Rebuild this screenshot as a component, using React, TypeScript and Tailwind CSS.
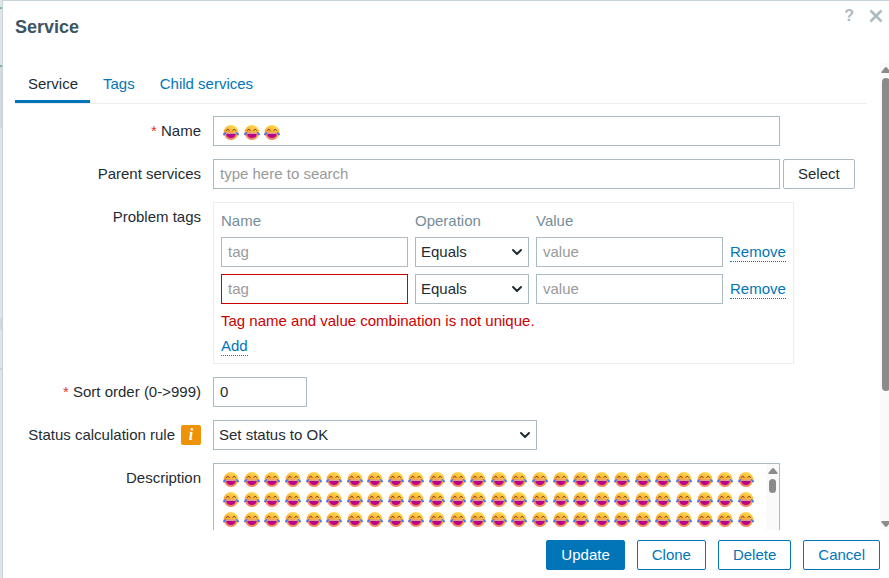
import { ChevronDown } from "lucide-react";
import { useState, type ReactNode } from "react";

type ProblemTag = { id: number; tag: string; operator: string; value: string; invalid?: boolean };

const TABS = ["Service", "Tags", "Child services"];

const FIELD = "h-[30px] w-full border border-[#acbbc2] bg-white px-[6px] pb-px outline-none placeholder:text-[#9a9a9a]";
const OUTLINE_BUTTON = "h-[30px] rounded-[2px] border border-[#0275b8] bg-white px-[14px] text-[#0275b8] hover:bg-sky-50";
const LINK = "border-b border-dotted border-[#0275b8] leading-[18px] text-[#0275b8]";

function JoyFace() {
  return (
    <svg viewBox="0 0 16 15" className="h-[15px] w-4" aria-hidden="true">
      <circle cx="8" cy="7.5" r="7.4" fill="url(#joy-skin)" />
      <path d="M3.400 5.400c.5-1.500 2.300-1.500 2.800 0M9.800 5.400c.5-1.500 2.300-1.500 2.800 0" fill="none" stroke="#70421d" strokeWidth="1" strokeLinecap="round" />
      <path d="M3.200 8.800h9.600c0 2.600-2 4.200-4.800 4.200s-4.800-1.600-4.800-4.200z" fill="#b8008f" />
      <path d="M3.200 7.600h9.600v1.300H3.200z" fill="#dba097" />
      <path d="M3.400 7C2.200 7 0 8.300 0 9.400c0 1.100 1.600 1.300 2.200.4.500-.9.600-1.800 1.200-2.800zM12.600 7c1.200 0 3.400 1.300 3.400 2.400 0 1.100-1.600 1.300-2.200.4-.5-.9-.6-1.800-1.200-2.800z" fill="#4379ee" />
    </svg>
  );
}

function EmojiText({ text }: { text: string }) {
  return (
    <div className="pointer-events-none absolute inset-0 grid auto-rows-[20px] grid-cols-[repeat(26,minmax(0,1fr))] content-start items-center justify-items-center overflow-hidden pt-[6px] pr-6 pl-2">
      {Array.from(text).map((char, i) => (char === "😂" ? <JoyFace key={i} /> : <span key={i}>{char}</span>))}
    </div>
  );
}

function Row({ label, htmlFor, required, hint, children }: { label: string; htmlFor?: string; required?: boolean; hint?: ReactNode; children: ReactNode }) {
  return (
    <div className="grid grid-cols-[186px_minmax(0,1fr)] gap-3">
      <div className="flex h-[30px] items-center justify-end gap-[6px] whitespace-nowrap">
        <label htmlFor={htmlFor}>
          {required ? <span className="text-[#e33734]">* </span> : null}
          {label}
        </label>
        {hint}
      </div>
      {children}
    </div>
  );
}

function Dropdown({ id, label, value, options, onChange }: { id?: string; label?: string; value: string; options: string[]; onChange: (value: string) => void }) {
  return (
    <div className="relative">
      <select
        id={id}
        aria-label={label}
        value={value}
        onChange={(e) => onChange(e.target.value)}
        className="block h-[30px] w-full appearance-none border border-[#acbbc2] bg-white pr-6 pl-[5px] outline-none"
      >
        {options.map((option) => (
          <option key={option}>{option}</option>
        ))}
      </select>
      <ChevronDown className="pointer-events-none absolute top-[7px] right-1 h-4 w-4" strokeWidth={3} />
    </div>
  );
}

function Arrow({ down }: { down?: boolean }) {
  return (
    <svg viewBox="0 0 10 6" className="h-[6px] w-[10px] shrink-0" aria-hidden="true">
      <path d={down ? "M1 0h8q1 .3.500 1.200L6 5.500q-1 .8-2 0L.5 1.200Q0 .3 1 0z" : "M1 6h8q1-.3.500-1.200L6 .5Q5-.3 4 .5L.5 4.800Q0 5.700 1 6z"} fill="#8b8b8b" />
    </svg>
  );
}

// The strip of the service list that stays visible beside the dialog
function PageEdge() {
  return (
    <div className="flex w-[2px] shrink-0 flex-col bg-[#dfe5e9]">
      <div className="h-[7px]" />
      <div className="h-[2px] bg-[#7bbd92]" />
      <div className="h-14" />
      <div className="h-[2px] bg-[#7bbd92]" />
      <div className="h-[61px] bg-[#d3dadd]" />
      <div className="h-[190px]" />
      <div className="h-3 bg-[#d2d9dd]" />
      <div className="h-[38px]" />
      <div className="h-[2px] bg-[#ccd4d9]" />
    </div>
  );
}

export default function App() {
  const [activeTab, setActiveTab] = useState("Service");
  const [name, setName] = useState("😂".repeat(3));
  const [parent, setParent] = useState("");
  const [sortOrder, setSortOrder] = useState("0");
  const [rule, setRule] = useState("Set status to OK");
  const [description, setDescription] = useState("😂".repeat(26 * 6));
  const [tags, setTags] = useState<ProblemTag[]>([
    { id: 1, tag: "", operator: "Equals", value: "" },
    { id: 2, tag: "", operator: "Equals", value: "", invalid: true },
  ]);

  const updateTag = (id: number, patch: Partial<ProblemTag>) => {
    setTags((prev) => prev.map((row) => (row.id === id ? { ...row, ...patch } : row)));
  };

  const onAddTag = () => {
    setTags((prev) => [...prev, { id: Date.now(), tag: "", operator: "Equals", value: "" }]);
  };

  return (
    <div className="flex h-screen bg-white font-['Liberation_Sans',Arial,sans-serif] text-[15px] leading-5 text-[#1f2c33]">
      <svg className="absolute h-0 w-0" aria-hidden="true">
        <defs>
          <linearGradient id="joy-skin" x1="0.7" y1="0" x2="0.3" y2="1">
            <stop offset="0" stopColor="#ffe04f" />
            <stop offset="0.55" stopColor="#fba535" />
            <stop offset="1" stopColor="#ec7a72" />
          </linearGradient>
        </defs>
      </svg>
      <PageEdge />

      <div role="dialog" aria-labelledby="dialog-title" className="flex min-w-0 flex-1 flex-col border-t border-l border-[#c8d2da]">
        <header className="flex h-[62px] shrink-0 items-start justify-between pr-[5px] pl-3">
          <h1 id="dialog-title" className="pt-4 text-lg leading-5 font-bold text-[#3c5563]">
            Service
          </h1>
          <div className="flex items-center gap-[14px] pt-[7px] text-[#acbbc2]">
            <a href="#help" aria-label="Help" className="text-base leading-4 font-bold">
              ?
            </a>
            <button type="button" aria-label="Close" className="flex h-4 w-4 items-center justify-center">
              <svg viewBox="0 0 14 14" className="h-[14px] w-[14px]" fill="none" stroke="currentColor" strokeWidth="2.5">
                <path d="M1.500 1.500l11 11M12.500 1.500l-11 11" />
              </svg>
            </button>
          </div>
        </header>

        <div className="flex min-h-0 flex-1">
          <div className="min-w-0 flex-1 overflow-y-auto pr-3 pl-3 [scrollbar-width:none]">
            <nav role="tablist" className="flex border-b border-[#ebeef0]">
              {TABS.map((tab) => (
                <button
                  key={tab}
                  type="button"
                  role="tab"
                  aria-selected={tab === activeTab}
                  onClick={() => setActiveTab(tab)}
                  className={
                    tab === activeTab
                      ? "h-10 border-b-[3px] border-[#0275b8] pt-[5px] pr-3 pl-[13px]"
                      : "h-10 border-b-[3px] border-transparent pt-[5px] pr-3 pl-[13px] text-[#0275b8]"
                  }
                >
                  {tab}
                </button>
              ))}
            </nav>

            <form className="flex flex-col gap-[13px] pt-3" onSubmit={(e) => e.preventDefault()}>
              <Row label="Name" htmlFor="name" required>
                <div className="relative w-full max-w-[567px]">
                  <input id="name" value={name} onChange={(e) => setName(e.target.value)} className={`${FIELD} text-transparent caret-black`} />
                  <EmojiText text={name} />
                </div>
              </Row>

              <Row label="Parent services" htmlFor="parent">
                <div className="flex gap-[3px]">
                  <div className="w-full max-w-[567px]">
                    <input id="parent" placeholder="type here to search" value={parent} onChange={(e) => setParent(e.target.value)} className={FIELD} />
                  </div>
                  <button type="button" className="h-[30px] rounded-[2px] border border-[#acbbc2] bg-white px-[14px]">
                    Select
                  </button>
                </div>
              </Row>

              <Row label="Problem tags">
                <div className="w-full max-w-[581px] border border-[#ebeef0] px-[7px] pb-[7px]">
                  <table className="w-full table-fixed text-left">
                    <thead className="text-[#768d99]">
                      <tr className="h-[34px]">
                        <th className="pt-[2px] font-normal">Name</th>
                        <th className="w-[121px] pt-[2px] font-normal">Operation</th>
                        <th className="pt-[2px] font-normal">Value</th>
                        <th className="w-[56px]" />
                      </tr>
                    </thead>
                    <tbody>
                      {tags.map((row) => (
                        <tr key={row.id}>
                          <td className="pr-[7px] pb-[7px]">
                            <input
                              aria-label="Tag name"
                              aria-invalid={row.invalid}
                              placeholder="tag"
                              value={row.tag}
                              onChange={(e) => updateTag(row.id, { tag: e.target.value })}
                              className="block h-[30px] w-full border border-[#acbbc2] bg-white px-[6px] pb-px outline-none placeholder:text-[#9a9a9a] aria-invalid:border-[#c00]"
                            />
                          </td>
                          <td className="pr-[7px] pb-[7px]">
                            <Dropdown
                              label="Operation"
                              value={row.operator}
                              options={["Equals", "Contains"]}
                              onChange={(operator) => updateTag(row.id, { operator })}
                            />
                          </td>
                          <td className="pr-[7px] pb-[7px]">
                            <input
                              aria-label="Tag value"
                              placeholder="value"
                              value={row.value}
                              onChange={(e) => updateTag(row.id, { value: e.target.value })}
                              className={`${FIELD} block`}
                            />
                          </td>
                          <td className="pb-[7px]">
                            <button type="button" onClick={() => setTags((prev) => prev.filter((t) => t.id !== row.id))} className={LINK}>
                              Remove
                            </button>
                          </td>
                        </tr>
                      ))}
                    </tbody>
                  </table>
                  <p className="mb-[6px] text-[#c00]">Tag name and value combination is not unique.</p>
                  <button type="button" onClick={onAddTag} className={`${LINK} block`}>
                    Add
                  </button>
                </div>
              </Row>

              <Row label="Sort order (0->999)" htmlFor="sort-order" required>
                <div className="w-[94px]">
                  <input id="sort-order" value={sortOrder} onChange={(e) => setSortOrder(e.target.value)} className={FIELD} />
                </div>
              </Row>

              <Row
                label="Status calculation rule"
                htmlFor="rule"
                hint={
                  <button type="button" aria-label="Status calculation help" className="h-5 w-5 rounded-[2px] bg-[#ee9208] font-['Liberation_Serif',serif] text-base leading-5 font-bold text-white italic">
                    i
                  </button>
                }
              >
                <div className="w-full max-w-[324px]">
                  <Dropdown
                    id="rule"
                    value={rule}
                    options={["Set status to OK", "Most critical of child services", "Most critical if all children have problems"]}
                    onChange={setRule}
                  />
                </div>
              </Row>

              <Row label="Description" htmlFor="description">
                <div className="relative w-full max-w-[567px]">
                  <textarea
                    id="description"
                    value={description}
                    onChange={(e) => setDescription(e.target.value)}
                    className="block h-[110px] w-full resize-none border border-[#acbbc2] bg-white px-[6px] pt-[6px] text-transparent caret-black outline-none [scrollbar-width:none]"
                  />
                  <EmojiText text={description} />
                  <div className="absolute inset-y-px right-px flex w-[13px] flex-col items-center bg-[#fafafa] py-1">
                    <Arrow />
                    <div className="mt-[5px] h-[14px] w-[7px] rounded-full bg-[#8b8b8b]" />
                    <div className="flex-1" />
                    <Arrow down />
                  </div>
                </div>
              </Row>
            </form>
          </div>

          <div className="ml-[1px] flex w-[9px] shrink-0 flex-col items-start overflow-hidden bg-[#fafafa] pt-1 pb-[3px] pl-px">
            <Arrow />
            <div className="mt-[5px] ml-px h-[68%] w-2 rounded-full bg-[#8b8b8b]" />
            <div className="flex-1" />
            <Arrow down />
          </div>
        </div>

        <footer className="flex h-12 shrink-0 items-center justify-end gap-3 pr-[9px] pt-[2px]">
          <button type="button" className="h-[30px] rounded-[2px] border border-[#0275b8] bg-[#0275b8] px-[14px] text-white hover:bg-sky-800">
            Update
          </button>
          <button type="button" className={OUTLINE_BUTTON}>
            Clone
          </button>
          <button type="button" className={OUTLINE_BUTTON}>
            Delete
          </button>
          <button type="button" className={OUTLINE_BUTTON}>
            Cancel
          </button>
        </footer>
      </div>
    </div>
  );
}
